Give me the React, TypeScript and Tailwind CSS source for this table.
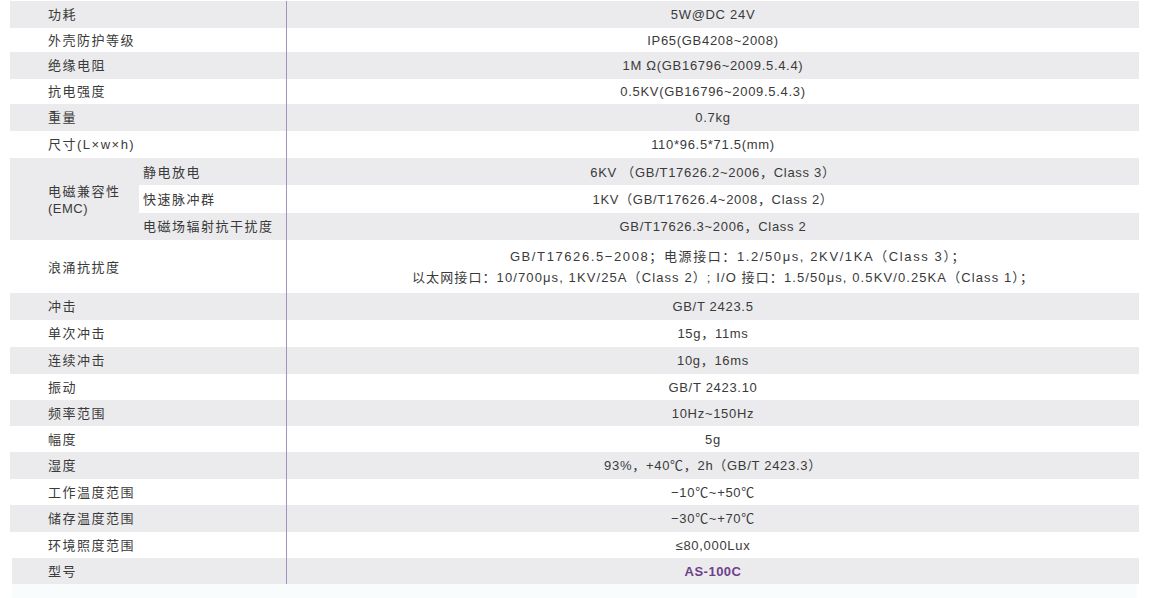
const font = { fontFamily: '"Liberation Sans", "Noto Sans CJK SC", sans-serif' };

type Row = { label: string; value: string; h: string };

const top: Row[] = [
  { label: '功耗', value: '5W@DC 24V', h: 'h-[27px]' },
  { label: '外壳防护等级', value: 'IP65(GB4208~2008)', h: 'h-[24px]' },
  { label: '绝缘电阻', value: '1M Ω(GB16796~2009.5.4.4)', h: 'h-[27px]' },
  { label: '抗电强度', value: '0.5KV(GB16796~2009.5.4.3)', h: 'h-[25px]' },
  { label: '重量', value: '0.7kg', h: 'h-[27px]' },
  { label: '尺寸(L×w×h)', value: '110*96.5*71.5(mm)', h: 'h-[27px]' },
];

const bottom: Row[] = [
  { label: '冲击', value: 'GB/T 2423.5', h: 'h-[27px]' },
  { label: '单次冲击', value: '15g，11ms', h: 'h-[27px]' },
  { label: '连续冲击', value: '10g，16ms', h: 'h-[27px]' },
  { label: '振动', value: 'GB/T 2423.10', h: 'h-[26px]' },
  { label: '频率范围', value: '10Hz~150Hz', h: 'h-[26px]' },
  { label: '幅度', value: '5g', h: 'h-[26.5px]' },
  { label: '湿度', value: '93%，+40℃，2h（GB/T 2423.3）', h: 'h-[26.5px]' },
  { label: '工作温度范围', value: '−10℃~+50℃', h: 'h-[26px]' },
  { label: '储存温度范围', value: '−30℃~+70℃', h: 'h-[27px]' },
  { label: '环境照度范围', value: '≤80,000Lux', h: 'h-[26px]' },
];

const emc = [
  { label: '静电放电', value: '6KV （GB/T17626.2~2006，Class 3）' },
  { label: '快速脉冲群', value: '1KV（GB/T17626.4~2008，Class 2）' },
  { label: '电磁场辐射抗干扰度', value: 'GB/T17626.3~2006，Class 2' },
];

const line = 'border-r border-[#a393b8]';
const val = 'tracking-[0.7px]';

function SpecRow({ row, gray }: { row: Row; gray: boolean }) {
  return (
    <div className={`flex ${row.h} ${gray ? 'bg-[#ebebed]' : 'bg-white'}`}>
      <div className={`w-[277px] shrink-0 flex items-center pl-[38px] pt-[1px] tracking-[1.5px] ${line}`}>{row.label}</div>
      <div className={`flex-1 flex items-center justify-center pt-[1px] ${val}`}>{row.value}</div>
    </div>
  );
}

export default function App() {
  return (
    <div className="w-[1149px] h-[598px] bg-white text-[13px] text-[#3a3a3a] overflow-hidden" style={font}>
      <div className="px-[10px] pt-[1px]">
        {top.map((r, i) => (
          <SpecRow key={r.label} row={r} gray={i % 2 === 0} />
        ))}

        {/* EMC */}
        <div className="flex bg-[#ebebed]">
          <div className="w-[129px] shrink-0 flex flex-col justify-center pl-[38px] pt-[2px] tracking-[1.5px] leading-[17px]">
            <span>电磁兼容性</span>
            <span className="tracking-[0.5px]">(EMC)</span>
          </div>
          <div className="flex-1 flex flex-col">
            {emc.map((e, i) => (
              <div key={e.label} className={`flex h-[27.3px] ${i === 1 ? 'bg-white' : ''}`}>
                <div className={`w-[148px] shrink-0 flex items-center pl-[4px] pt-[2px] tracking-[1.5px] ${line}`}>{e.label}</div>
                <div className={`flex-1 flex items-center justify-center pt-[2px] ${val}`}>{e.value}</div>
              </div>
            ))}
          </div>
        </div>

        {/* surge */}
        <div className="flex h-[53px] bg-white">
          <div className={`w-[277px] shrink-0 flex items-center pl-[38px] pt-[2px] tracking-[1.5px] ${line}`}>浪涌抗扰度</div>
          <div className="flex-1 flex flex-col items-center justify-center pt-[2px] leading-[21px]">
            <span className="ml-[50px] tracking-[1.6px]">GB/T17626.5−2008；电源接口：1.2/50μs, 2KV/1KA（Class 3）；</span>
            <span className="ml-[20px] tracking-[1.1px]">以太网接口：10/700μs, 1KV/25A（Class 2）; I/O 接口：1.5/50μs, 0.5KV/0.25KA（Class 1）；</span>
          </div>
        </div>

        {bottom.map((r, i) => (
          <SpecRow key={r.label} row={r} gray={i % 2 === 0} />
        ))}

        <div className="flex h-[26px] bg-[#ebebed] ml-[2px]">
          <div className={`w-[275px] shrink-0 flex items-center pl-[36px] pt-[1px] tracking-[1.5px] ${line}`}>型号</div>
          <div className="flex-1 flex items-center justify-center pt-[1px] font-bold tracking-[0.5px] text-[#6e3f8c]">AS-100C</div>
        </div>
      </div>
      <div className="mx-[12px] h-[20px] bg-[#f9fcfc]" />
    </div>
  );
}
